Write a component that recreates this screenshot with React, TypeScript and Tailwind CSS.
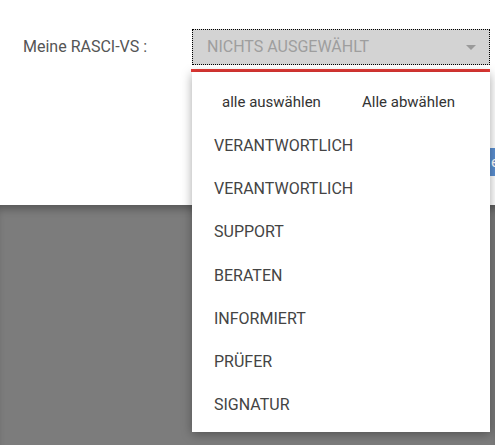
import React from 'react';

const options = ['VERANTWORTLICH', 'VERANTWORTLICH', 'SUPPORT', 'BERATEN', 'INFORMIERT', 'PRÜFER', 'SIGNATUR'];

const App: React.FC = () => {
  return (
    <div className="relative w-[495px] h-[445px] overflow-hidden bg-white font-['Roboto',sans-serif]">
      <div className="h-[205px] pt-[29px]">
        <div className="flex items-center">
          <label className="w-[192px] pl-[23px] text-[16px] text-[#555]">Meine RASCI-VS :</label>
          <div className="relative w-[298px]">
            <button className="flex items-center justify-between w-full h-[36px] px-[14px] bg-[#d3d3d3] border border-dotted border-black text-left">
              <span className="text-[16px] text-[#9e9e9e]">NICHTS AUSGEWÄHLT</span>
              <svg width="10" height="5" viewBox="0 0 10 5" className="mr-[-1px]">
                <path d="M0 0h10L5 5z" fill="#9a9a9a" />
              </svg>
            </button>
            <div className="absolute left-[-1px] right-0 top-[40px] z-10">
              <div className="h-[3px] bg-[#e53935]" />
              <div className="ml-[1px] bg-white shadow-[0_2px_10px_rgba(0,0,0,0.35)] pb-[5px]">
                <div className="flex items-center h-[52px] pt-[8px] text-[15px] text-[#333]">
                  <span className="pl-[30px] w-[170px]">alle auswählen</span>
                  <span>Alle abwählen</span>
                </div>
                {options.map((o, i) => (
                  <div key={i} className="flex items-center h-[43.3px] pl-[22px] text-[16px] text-[#444]">
                    {o}
                  </div>
                ))}
              </div>
            </div>
          </div>
        </div>
        <div className="flex mt-[83px] pl-[489px]">
          <button className="shrink-0 h-[28px] px-[2px] bg-[#5b8fd0] text-white text-[15px]">ernehmen</button>
        </div>
      </div>
      <div className="h-[240px] bg-[#7c7c7c] shadow-[inset_0_8px_8px_-4px_rgba(0,0,0,0.3)]" />
    </div>
  );
};

export default App;
